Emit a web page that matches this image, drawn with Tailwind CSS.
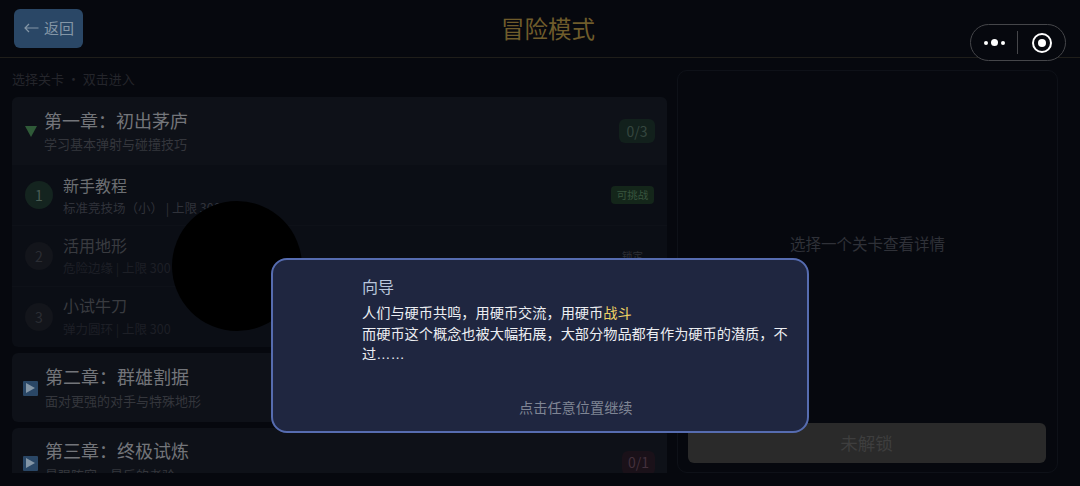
<!DOCTYPE html>
<html lang="zh-CN">
<head>
    <meta charset="UTF-8">
    <title>冒险模式</title>
    <script src="https://cdn.jsdelivr.net/npm/@tailwindcss/browser@4"></script>
</head>
<body class="bg-[#06080e] font-['Noto_Sans_CJK_SC','Liberation_Sans',sans-serif]">
    <div class="relative w-[1080px] h-[486px] overflow-hidden">
        <!-- Header -->
        <header class="relative h-[58px] border-b border-[#1f1e1a] flex items-center pl-[14px]">
            <div class="w-[69px] h-[39px] mb-[1px] rounded-[6px] bg-[#2a4766] flex items-center pl-[10px] gap-[5px] text-[15px] text-[#8496a6]">
                <svg width="15" height="10" viewBox="0 0 15 10" fill="none" stroke="#8496a6" stroke-width="1.2"><path d="M14.5 5H1M5 1L1 5l4 4"/></svg>
                <span>返回</span>
            </div>
            <h1 class="absolute left-[501px] top-[11px] text-[23.5px] leading-[34px] text-[#6f5c2b]">冒险模式</h1>
            <!-- Capsule -->
            <div class="absolute left-[970px] top-[24px] w-[96px] h-[37px] rounded-full border border-[#45464a] bg-[#06080e] flex items-center">
                <div class="w-[47px] flex items-center justify-center gap-[3px]">
                    <span class="w-[4px] h-[4px] rounded-full bg-white"></span>
                    <span class="w-[7px] h-[7px] rounded-full bg-white"></span>
                    <span class="w-[4px] h-[4px] rounded-full bg-white"></span>
                </div>
                <div class="w-px h-[23px] bg-[#45464a] -ml-px"></div>
                <div class="flex-1 flex items-center justify-center">
                    <div class="w-[20px] h-[20px] rounded-full border-[2px] border-white flex items-center justify-center">
                        <span class="w-[8px] h-[8px] rounded-full bg-white"></span>
                    </div>
                </div>
            </div>
        </header>

        <main class="flex gap-[10px] pl-[12px] pt-[12px] h-[415px]">
            <!-- Level list -->
            <section class="w-[655px] h-[403px] overflow-hidden">
                <p class="h-[27px] -mt-px mb-px text-[13px] leading-[20px] text-[#24252b]">选择关卡 · 双击进入</p>
                <div class="rounded-[6px] bg-[#0b0e15] overflow-hidden mb-[6px]">
                    <div class="h-[68px] bg-[#0e1118] flex items-center pl-[13px] pr-[12px]">
                        <span class="w-0 h-0 border-x-[6px] border-x-transparent border-t-[11px] border-t-[#2f5a38] mt-[1px] mr-[7px]"></span>
                        <div class="flex-1 -mt-[1px]">
                            <div class="text-[18px] leading-[24px] text-[#73757a]">第一章：初出茅庐</div>
                            <div class="mt-[2px] text-[13px] leading-[19px] text-[#34363c]">学习基本弹射与碰撞技巧</div>
                        </div>
                        <span class="w-[36px] h-[24px] rounded-[6px] bg-[#12201c] flex items-center justify-center text-[14px] text-[#35463f]">0/3</span>
                    </div>
                    <div class="h-[61px] flex items-center pl-[13px] pr-[13px] border-b border-[#0e1118]">
                        <span class="w-[28px] h-[28px] rounded-full bg-[#14241f] flex items-center justify-center text-[14px] text-[#4a5d54] mr-[10px]">1</span>
                        <div class="flex-1 -mt-[1px]">
                            <div class="text-[16px] leading-[24px] text-[#6c6e72]">新手教程</div>
                            <div class="mt-[2px] text-[12.5px] leading-[18px] text-[#30323a]">标准竞技场（小） | 上限 300</div>
                        </div>
                        <span class="w-[43px] h-[18px] rounded-[4px] bg-[#14261a] flex items-center justify-center text-[10.5px] text-[#38553e]">可挑战</span>
                    </div>
                    <div class="h-[61px] flex items-center pl-[13px] pr-[13px] border-b border-[#0e1118]">
                        <span class="w-[28px] h-[28px] rounded-full bg-[#13151b] flex items-center justify-center text-[14px] text-[#2b2d33] mr-[10px]">2</span>
                        <div class="flex-1 -mt-[3px]">
                            <div class="text-[16px] leading-[24px] text-[#393b40]">活用地形</div>
                            <div class="mt-[2px] text-[12.5px] leading-[18px] text-[#1d1f26]">危险边缘 | 上限 300</div>
                        </div>
                        <span class="w-[43px] h-[18px] flex items-center justify-center text-[10.5px] text-[#2e3036]">锁定</span>
                    </div>
                    <div class="h-[60px] flex items-center pl-[13px] pr-[13px]">
                        <span class="w-[28px] h-[28px] rounded-full bg-[#13151b] flex items-center justify-center text-[14px] text-[#2b2d33] mr-[10px]">3</span>
                        <div class="flex-1 -mt-[3px]">
                            <div class="text-[16px] leading-[24px] text-[#393b40]">小试牛刀</div>
                            <div class="mt-[3px] text-[12.5px] leading-[18px] text-[#1d1f26]">弹力圆环 | 上限 300</div>
                        </div>
                    </div>
                </div>
                <div class="h-[69px] rounded-[6px] bg-[#0e1118] flex items-center pl-[11px] pr-[12px] mb-[6px]">
                    <span class="w-[15px] h-[15px] rounded-[1px] bg-[#2a4766] flex items-center justify-center mt-[1px] mr-[7px] shrink-0">
                        <span class="w-0 h-0 border-y-[5px] border-y-transparent border-l-[9px] border-l-[#8496a6]"></span>
                    </span>
                    <div class="flex-1 -mt-[2px]">
                        <div class="text-[18px] leading-[24px] text-[#73757a]">第二章：群雄割据</div>
                        <div class="mt-[3px] text-[13px] leading-[19px] text-[#34363c]">面对更强的对手与特殊地形</div>
                    </div>
                </div>
                <div class="h-[69px] rounded-[6px] bg-[#0e1118] flex items-center pl-[11px] pr-[12px]">
                    <span class="w-[15px] h-[15px] rounded-[1px] bg-[#2a4766] flex items-center justify-center mt-[1px] mr-[7px] shrink-0">
                        <span class="w-0 h-0 border-y-[5px] border-y-transparent border-l-[9px] border-l-[#8496a6]"></span>
                    </span>
                    <div class="flex-1 -mt-[4px]">
                        <div class="text-[18px] leading-[24px] text-[#73757a]">第三章：终极试炼</div>
                        <div class="mt-[3px] text-[13px] leading-[19px] text-[#34363c]">最强阵容，最后的考验</div>
                    </div>
                    <span class="w-[33px] h-[24px] rounded-[6px] bg-[#1a1119] flex items-center justify-center text-[14px] text-[#43303c]">0/1</span>
                </div>
            </section>

            <!-- Detail panel -->
            <aside class="w-[381px] h-[403px] rounded-[10px] border border-[#0e1118] flex flex-col items-center pb-[9px]">
                <div class="flex-1 flex items-center justify-center pb-[6px] text-[15.5px] text-[#2f3138]">选择一个关卡查看详情</div>
                <div class="w-[358px] h-[40px] mr-[2px] rounded-[6px] bg-[#2a2a2a] flex items-center justify-center text-[17.5px] text-[#3e3e3e]">未解锁</div>
            </aside>
        </main>

        <!-- Guide avatar behind dialog -->
        <div class="absolute left-[172px] top-[201px] w-[130px] h-[130px] rounded-full bg-black"></div>

        <!-- Dialog -->
        <div class="absolute left-[271px] top-[258px] w-[538px] h-[175px] rounded-[16px] border-2 border-[#566cb0] bg-[#1f2640] pl-[89px] pr-[18px] pt-[14px]">
            <div class="text-[16px] leading-[24px] text-[#b9c6dc]">向导</div>
            <div class="mt-[4px] text-[14.2px] leading-[20.5px] text-[#eceef2]">人们与硬币共鸣，用硬币交流，用硬币<span class="text-[#f0d264]">战斗</span><br>而硬币这个概念也被大幅拓展，大部分物品都有作为硬币的潜质，不过<span class="font-['Liberation_Sans']">……</span></div>
            <div class="absolute left-[246px] top-[136px] text-[14.2px] leading-[22px] text-[#7f8594]">点击任意位置继续</div>
        </div>
    </div>
</body>
</html>
